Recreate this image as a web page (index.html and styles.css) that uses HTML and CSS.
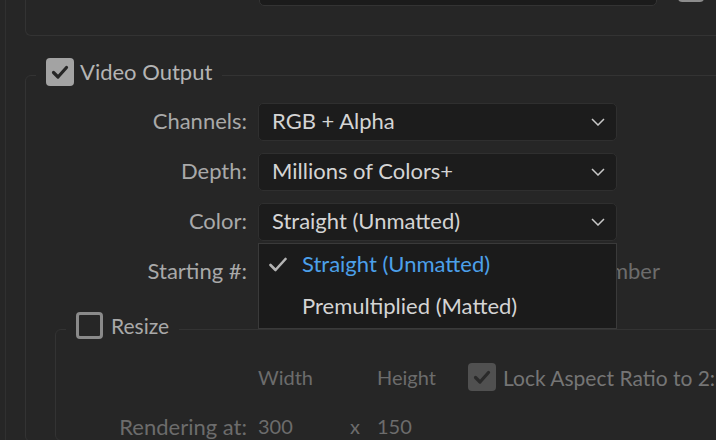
FILE: index.html
```html
<!DOCTYPE html>
<html>
<head>
<meta charset="utf-8">
<link rel="stylesheet" href="styles.css">
</head>
<body>
<div class="rail">
  <div class="topgroup">
    <div class="topfield"></div>
    <div class="topbtn"></div>
  </div>

  <fieldset class="group video">
    <legend class="legend">
      <span class="cb cb-on"><svg viewBox="0 0 28 28" width="28" height="28"><path d="M7.5 14.5 L12 19 L20.5 9.5" fill="none" stroke="#262626" stroke-width="3.2" stroke-linecap="round" stroke-linejoin="round"/></svg></span>
      <span class="legend-text">Video Output</span>
    </legend>

    <div class="rows">
      <span class="label">Channels:</span>
      <div class="select"><span>RGB + Alpha</span><svg class="chev" viewBox="0 0 14 8" width="14" height="8"><path d="M1 1 L7 7 L13 1" fill="none" stroke="#c8c8c8" stroke-width="1.5"/></svg></div>

      <span class="label">Depth:</span>
      <div class="select"><span>Millions of Colors+</span><svg class="chev" viewBox="0 0 14 8" width="14" height="8"><path d="M1 1 L7 7 L13 1" fill="none" stroke="#c8c8c8" stroke-width="1.5"/></svg></div>

      <span class="label">Color:</span>
      <div class="select-wrap">
        <div class="select"><span>Straight (Unmatted)</span><svg class="chev" viewBox="0 0 14 8" width="14" height="8"><path d="M1 1 L7 7 L13 1" fill="none" stroke="#c8c8c8" stroke-width="1.5"/></svg></div>
        <div class="menu">
          <div class="menu-item selected"><svg class="tick" viewBox="0 0 18 15" width="18" height="15"><path d="M1.5 8 L6.5 13 L16.5 2" fill="none" stroke="#b4b4b4" stroke-width="2.6" stroke-linecap="round" stroke-linejoin="round"/></svg><span>Straight (Unmatted)</span></div>
          <div class="menu-item"><span>Premultiplied (Matted)</span></div>
        </div>
      </div>

      <span class="label">Starting #:</span>
      <div class="startrow"><span class="dim usecomp">Use Comp Frame Number</span></div>
    </div>

    <fieldset class="group resize">
      <legend class="legend">
        <span class="cb cb-off"></span>
        <span class="legend-text">Resize</span>
      </legend>
      <div class="resize-grid">
        <span></span>
        <span class="dim">Width</span>
        <span></span>
        <span class="dim">Height</span>
        <span class="lock"><span class="cb cb-dis"><svg viewBox="0 0 28 28" width="28" height="28"><path d="M7.5 14.5 L12 19 L20.5 9.5" fill="none" stroke="#2a2a2a" stroke-width="3.2" stroke-linecap="round" stroke-linejoin="round"/></svg></span><span class="dim lock-text">Lock Aspect Ratio to 2:1 (2.00)</span></span>

        <span class="label dim">Rendering at:</span>
        <span class="dim">300</span>
        <span class="dim">x</span>
        <span class="dim">150</span>
        <span></span>
      </div>
    </fieldset>
  </fieldset>
</div>
</body>
</html>
```

FILE: styles.css
```css
html, body {
  margin: 0;
  padding: 0;
  background: #262626;
  overflow: hidden;
  width: 716px;
  height: 440px;
}

body {
  font-family: Lato, "Open Sans", sans-serif;
  font-size: 22px;
  color: #d4d4d4;
}

.rail {
  margin-left: 5px;
  border-left: 1px solid #303030;
  height: 440px;
  width: 900px;
}

.topgroup {
  margin-left: 19px;
  height: 35px;
  border-left: 1px solid #333333;
  border-bottom: 1px solid #333333;
  border-bottom-left-radius: 6px;
  display: flex;
  align-items: flex-start;
}

.topfield {
  margin-top: -34px;
  margin-left: 233px;
  width: 396px;
  height: 38px;
  background: #1b1b1b;
  border: 1px solid #333333;
  border-radius: 5px;
}

.topbtn {
  margin-top: -28px;
  margin-left: 21px;
  width: 26px;
  height: 30px;
  background: #8c8c8c;
  border-radius: 4px;
}

.group {
  margin: 0;
  padding: 0;
  border: 1px solid #333333;
  border-radius: 6px;
  min-width: 0;
}

.video {
  margin-top: 22px;
  margin-left: 19px;
  width: 860px;
  padding-top: 11px;
}

.legend {
  margin-left: 10px;
  padding: 0 10px 6px 10px;
  display: flex;
  align-items: flex-start;
  gap: 6px;
}

.legend-text {
  line-height: 28px;
  color: #b4b4b4;
  font-size: 22px;
}

.cb {
  display: inline-flex;
  width: 28px;
  height: 28px;
  box-sizing: border-box;
  border-radius: 4px;
  flex: none;
}

.cb-on {
  background: #a3a3a3;
}

.cb-off {
  width: 27px;
  height: 27px;
  border: 3px solid #8a8a8a;
}

.cb-dis {
  background: #505050;
}

.rows {
  display: grid;
  grid-template-columns: 221px 359px;
  grid-auto-rows: 38px;
  column-gap: 11px;
  row-gap: 12px;
  align-items: center;
}

.label {
  text-align: right;
  color: #a9a9a9;
}

.rows > .label {
  padding-bottom: 3px;
}

.select-wrap {
  position: relative;
  height: 38px;
}

.select {
  box-sizing: border-box;
  height: 38px;
  background: #1c1c1c;
  border: 1px solid #2f2f2f;
  border-radius: 5px;
  display: flex;
  align-items: center;
  justify-content: space-between;
  padding: 0 11px 3px 13px;
}

.chev {
  display: block;
  margin-top: 2px;
}

.menu {
  position: absolute;
  left: 0;
  top: 40px;
  width: 359px;
  height: 86px;
  box-sizing: border-box;
  background: #1b1b1b;
  border: 1px solid #3a3a3a;
  z-index: 5;
  display: flex;
  flex-direction: column;
}

.menu-item {
  box-sizing: border-box;
  height: 43px;
  display: flex;
  align-items: center;
  padding-left: 43px;
  padding-bottom: 3px;
  color: #d4d4d4;
  position: relative;
}

.menu-item.selected {
  color: #4ca0ea;
}

.tick {
  position: absolute;
  left: 10px;
  top: 13px;
}

.startrow {
  display: flex;
  align-items: center;
  height: 38px;
  padding-bottom: 3px;
  box-sizing: border-box;
}

.dim {
  color: #6c6c6c;
}

.usecomp {
  margin-left: 152px;
  white-space: nowrap;
}

.resize {
  margin-top: 21px;
  margin-left: 29px;
  width: 800px;
  padding-top: 17px;
}

.resize .legend {
  gap: 8px;
  padding-bottom: 7px;
}

.resize .legend-text {
  line-height: 27px;
  color: #a9a9a9;
  font-size: 21px;
}

.resize-grid {
  display: grid;
  grid-template-columns: 202px 92px 27px 91px auto;
  column-gap: 0;
  grid-auto-rows: 28px;
  row-gap: 21px;
  align-items: center;
  font-size: 20px;
}

.resize-grid .label {
  padding-right: 11px;
  font-size: 22px;
}

.lock {
  display: flex;
  align-items: center;
  gap: 7px;
  white-space: nowrap;
  font-size: 21px;
}

.lock-text {
  color: #757575;
}
```
